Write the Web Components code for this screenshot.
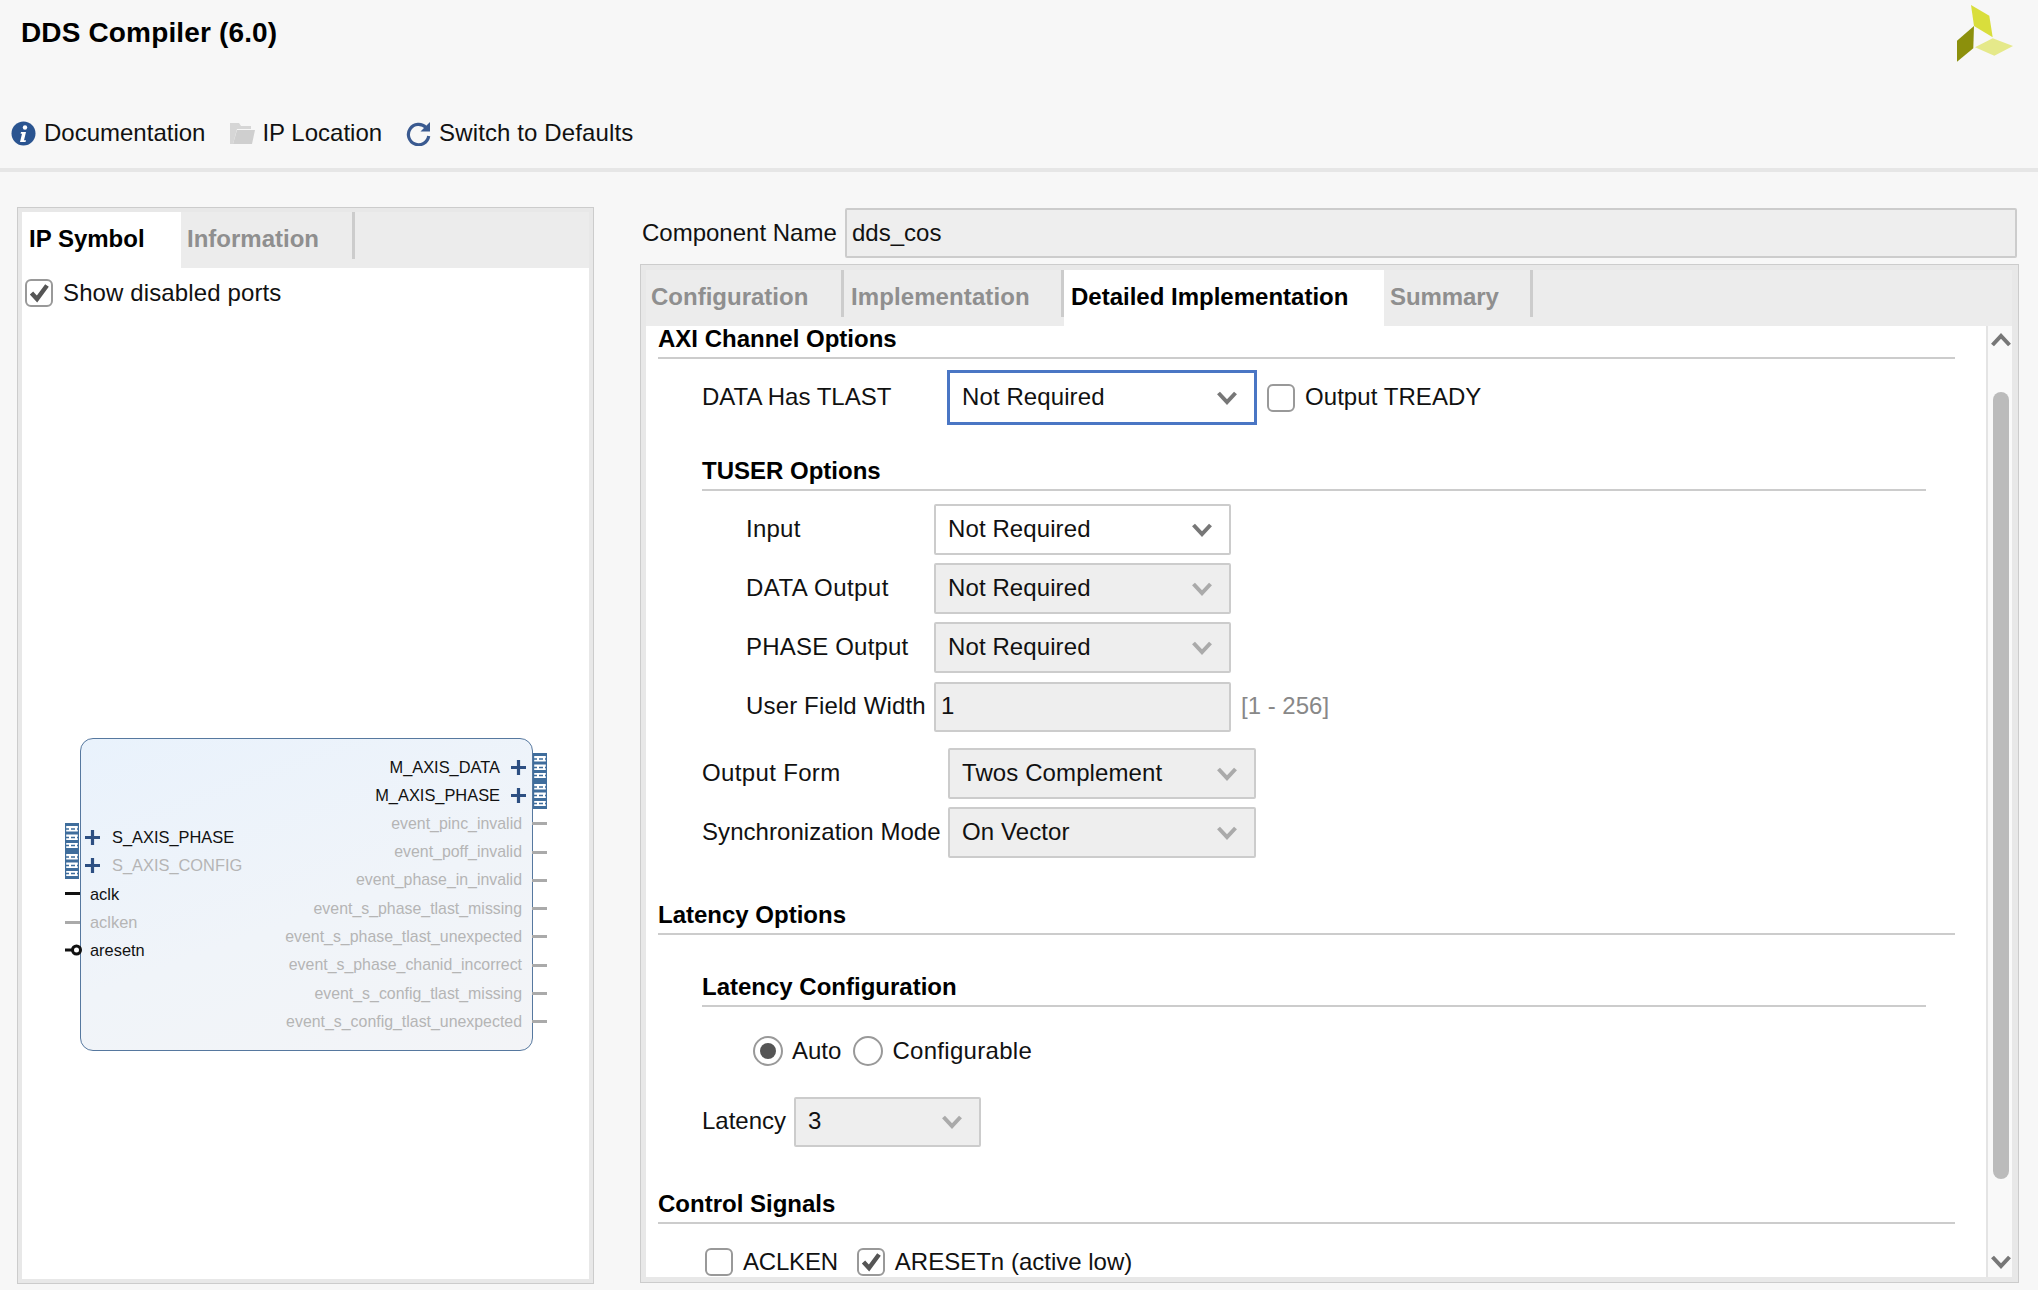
<!DOCTYPE html>
<html lang="en">
<head>
<meta charset="utf-8">
<title>DDS Compiler</title>
<style>
html,body{margin:0;padding:0;height:1290px;overflow:hidden;background:#f7f7f7}
body{font:24px/28px "Liberation Sans",Arial,sans-serif;color:#111}
</style>
</head>
<body>
<x-app>
  <x-header slot="header" title-text="DDS Compiler (6.0)">
    <x-tool>
      <svg slot="icon" width="25" height="25" viewBox="0 0 25 25"><circle cx="12.5" cy="12.5" r="12" fill="#2a5490"/><circle cx="14" cy="6.5" r="2.2" fill="#fff"/><path d="M10 11h5l-2 8.2h2l-.5 1.8H9l2-8.200H9.600z" fill="#fff"/></svg>
      Documentation
    </x-tool>
    <x-tool style="--ir:7px">
      <svg slot="icon" width="25" height="25" viewBox="0 0 25 25"><path d="M0 2h9l2 3h10v3H7L3 23H0z" fill="#d6d6d6"/><path d="M7 9h18l-3 14H3z" fill="#cfcfcf"/></svg>
      IP Location
    </x-tool>
    <x-tool style="margin-left:-1px;letter-spacing:.12px">
      <svg slot="icon" width="25" height="25" viewBox="0 0 25 25"><path d="M20 6.500A10.200 10.200 0 1 0 22.700 15" fill="none" stroke="#3a5a90" stroke-width="3.200"/><path d="M24 1v9.500h-9.500z" fill="#3a5a90"/></svg>
      Switch to Defaults
    </x-tool>
  </x-header>

  <x-panel slot="left" style="--pr:4px;--pl:4px;--pt:4px;--pb:4px;height:1077px">
    <x-tabs>
      <x-tab active style="width:159px;--tp:7px">IP Symbol</x-tab>
      <x-tab divider style="width:174px;--tp:6px">Information</x-tab>
    </x-tabs>
    <x-pane>
      <x-check checked style="margin:11px 0 0 3px;letter-spacing:.12px">Show disabled ports</x-check>
      <x-symbol style="margin:431px 0 0 58px">
        <x-port slot="left" kind="bus">S_AXIS_PHASE</x-port>
        <x-port slot="left" kind="bus" disabled>S_AXIS_CONFIG</x-port>
        <x-port slot="left" kind="line">aclk</x-port>
        <x-port slot="left" kind="line" disabled>aclken</x-port>
        <x-port slot="left" kind="neg">aresetn</x-port>
        <x-port slot="right" kind="bus">M_AXIS_DATA</x-port>
        <x-port slot="right" kind="bus">M_AXIS_PHASE</x-port>
        <x-port slot="right" kind="line" disabled>event_pinc_invalid</x-port>
        <x-port slot="right" kind="line" disabled>event_poff_invalid</x-port>
        <x-port slot="right" kind="line" disabled>event_phase_in_invalid</x-port>
        <x-port slot="right" kind="line" disabled>event_s_phase_tlast_missing</x-port>
        <x-port slot="right" kind="line" disabled>event_s_phase_tlast_unexpected</x-port>
        <x-port slot="right" kind="line" disabled>event_s_phase_chanid_incorrect</x-port>
        <x-port slot="right" kind="line" disabled>event_s_config_tlast_missing</x-port>
        <x-port slot="right" kind="line" disabled>event_s_config_tlast_unexpected</x-port>
      </x-symbol>
    </x-pane>
  </x-panel>

  <x-name-row slot="right" label="Component Name" value="dds_cos"></x-name-row>

  <x-panel slot="right" style="--pr:6px;--pl:5px;--pt:5px;--pb:5px;height:1019px;margin-top:6px">
    <x-tabs>
      <x-tab divider style="width:198px;--tp:5px">Configuration</x-tab>
      <x-tab divider style="width:220px;--tp:7px;letter-spacing:.1px">Implementation</x-tab>
      <x-tab active style="width:320px;--tp:7px">Detailed Implementation</x-tab>
      <x-tab divider style="width:149px;--tp:6px;letter-spacing:-.1px">Summary</x-tab>
    </x-tabs>
    <x-scroll>
      <x-section>AXI Channel Options</x-section>
      <x-row indent="44" label-width="245" style="margin-top:11px">
        <span slot="label">DATA Has TLAST</span>
        <x-combo focus style="width:310px;height:55px">Not Required</x-combo>
        <x-check style="margin-left:10px;letter-spacing:.06px;--tb:2px">Output TREADY</x-check>
      </x-row>
      <x-section sub style="margin-top:33px">TUSER Options</x-section>
      <x-row indent="88" label-width="188" style="margin-top:13px">
        <span slot="label" style="letter-spacing:.25px">Input</span>
        <x-combo enabled style="width:297px;height:51px">Not Required</x-combo>
      </x-row>
      <x-row indent="88" label-width="188" style="margin-top:8px">
        <span slot="label" style="letter-spacing:.45px">DATA Output</span>
        <x-combo style="width:297px;height:51px">Not Required</x-combo>
      </x-row>
      <x-row indent="88" label-width="188" style="margin-top:8px">
        <span slot="label" style="letter-spacing:.2px">PHASE Output</span>
        <x-combo style="width:297px;height:51px">Not Required</x-combo>
      </x-row>
      <x-row indent="88" label-width="188" style="margin-top:9px">
        <span slot="label" style="letter-spacing:.15px">User Field Width</span>
        <x-field style="width:297px;height:50px">1</x-field>
        <x-hint>[1 - 256]</x-hint>
      </x-row>
      <x-row indent="44" label-width="246" style="margin-top:16px">
        <span slot="label" style="letter-spacing:.35px">Output Form</span>
        <x-combo style="width:308px;height:51px">Twos Complement</x-combo>
      </x-row>
      <x-row indent="44" label-width="246" style="margin-top:8px">
        <span slot="label" style="letter-spacing:.06px">Synchronization Mode</span>
        <x-combo style="width:308px;height:51px">On Vector</x-combo>
      </x-row>
      <x-section style="margin-top:44px">Latency Options</x-section>
      <x-section sub style="margin-top:39px">Latency Configuration</x-section>
      <x-row indent="95" label-width="0" style="margin-top:29px">
        <x-radio checked>Auto</x-radio>
        <x-radio style="margin-left:12px;letter-spacing:.3px">Configurable</x-radio>
      </x-row>
      <x-row indent="44" label-width="92" style="margin-top:31px">
        <span slot="label">Latency</span>
        <x-combo style="width:187px;height:50px">3</x-combo>
      </x-row>
      <x-section style="margin-top:44px">Control Signals</x-section>
      <x-row indent="47" label-width="0" style="margin-top:24px">
        <x-check style="letter-spacing:-.2px">ACLKEN</x-check>
        <x-check checked style="margin-left:19px">ARESETn (active low)</x-check>
      </x-row>
    </x-scroll>
  </x-panel>
</x-app>

<script>
const CHECK = '<svg width="28" height="28" viewBox="0 0 28 28"><path d="M6.500 14l5.500 6 10-13.500" fill="none" stroke="#555" stroke-width="4.500"/></svg>';
function def(name, html, extra) {
  const t = document.createElement('template');
  t.innerHTML = html;
  customElements.define(name, class extends HTMLElement {
    constructor() {
      super();
      this.attachShadow({mode: 'open'}).appendChild(t.content.cloneNode(true));
    }
    connectedCallback() { if (extra) extra(this, this.shadowRoot); }
  });
}

def('x-app', `<style>
  :host{display:block;width:2038px;height:1290px;overflow:hidden}
  main{display:grid;grid-template-columns:577px 1379px;column-gap:46px;padding:35px 0 0 17px}
  .r{display:flex;flex-direction:column}
</style>
<slot name="header"></slot>
<main><div><slot name="left"></slot></div><div class="r"><slot name="right"></slot></div></main>`);

def('x-header', `<style>
  :host{display:block;height:168px;border-bottom:4px solid #e6e6e6;box-sizing:content-box}
  .top{display:flex;justify-content:space-between;height:115px;padding:0 25px 0 21px;box-sizing:border-box}
  h1{margin:17px 0 0;font:bold 28px/32px "Liberation Sans",Arial,sans-serif;color:#000;letter-spacing:.15px}
  svg{display:block;margin-top:5px}
  .bar{display:flex;align-items:center;height:36px;padding-left:11px;gap:25px}
</style>
<div class="top"><h1></h1>
<svg width="56" height="57" viewBox="1957 5 56 57"><polygon points="1971,5 1989.300,15.700 1992.700,37.300 1974,26" fill="#d9de3c"/><polygon points="1974,26 1973.300,48.300 1957,61.700 1957,40.700" fill="#8c900c"/><polygon points="1992.700,38.300 2013,46 1994.300,55.700 1975,47.300" fill="#e5e98a"/></svg></div>
<div class="bar"><slot></slot></div>`, (el, root) => { root.querySelector('h1').textContent = el.getAttribute('title-text'); });

def('x-tool', `<style>
  :host{display:flex;align-items:center;white-space:nowrap;height:36px}
  ::slotted(svg){display:block;margin-right:var(--ir,8px)}
</style><slot name="icon"></slot><slot></slot>`);

def('x-panel', `<style>
  :host{display:flex;flex-direction:column;box-sizing:border-box;border:1px solid #ccc;background:#e8e8e8;
    padding:var(--pt) var(--pr) var(--pb) var(--pl)}
</style><slot></slot>`);

def('x-tabs', `<style>
  :host{display:flex;height:56px;flex:none;background:#ececec}
</style><slot></slot>`);

def('x-tab', `<style>
  :host{display:block;height:56px;box-sizing:border-box;font-weight:bold;color:#8f8f8f;flex:none}
  :host([active]){background:#fff;color:#000}
  .in{height:47px;box-sizing:border-box;padding:13px 0 0 var(--tp,6px);line-height:28px;white-space:nowrap}
  :host([divider]) .in{border-right:3px solid #ccc}
</style><div class="in"><slot></slot></div>`);

def('x-pane', `<style>
  :host{display:block;flex:1;background:#fff;overflow:hidden}
</style><slot></slot>`);

def('x-check', `<style>
  :host{display:inline-flex;align-items:center;white-space:nowrap;height:28px;vertical-align:top}
  .b{width:28px;height:28px;box-sizing:border-box;border:2px solid #999;border-radius:6px;background:#fff;margin-right:10px;flex:none;overflow:hidden}
  .t{padding-bottom:var(--tb,0)}
  svg{display:block;margin:-2px}
  :host(:not([checked])) svg{display:none}
</style><span class="b">${CHECK}</span><span class="t"><slot></slot></span>`);

def('x-radio', `<style>
  :host{display:inline-flex;align-items:center;white-space:nowrap;height:30px}
  .b{width:30px;height:30px;box-sizing:border-box;border:2px solid #999;border-radius:50%;background:#fff;margin-right:9px;display:flex;align-items:center;justify-content:center;flex:none}
  i{display:none;width:16px;height:16px;border-radius:50%;background:#555}
  :host([checked]) i{display:block}
</style><span class="b"><i></i></span><slot></slot>`);

def('x-symbol', `<style>
  :host{display:flex;justify-content:space-between;width:453px;height:313px;box-sizing:border-box;
    border:1.500px solid #56789f;border-radius:13px;background:linear-gradient(160deg,#e9f2fc 0%,#f0f4f9 55%,#f3f4f7 100%);
    position:relative;font-size:16.400px;line-height:20px}
  .l{display:flex;flex-direction:column;padding-top:84px}
  .r{display:flex;flex-direction:column;padding-top:14px}
</style><div class="l"><slot name="left"></slot></div><div class="r"><slot name="right"></slot></div>`);

const busSvg = `<svg width="14" height="28" viewBox="0 0 14 28"><g fill="none" stroke="#3f6d9c"><path stroke-width="3" d="M0 1.500h14M0 10h14M0 18.500h14M0 26.500h14"/><path stroke-width="1.500" stroke-dasharray="4 2" d="M0 6h14M0 14.500h14M0 22.500h14"/></g><path d="M0.600 0v28M13.400 0v28" stroke="#3f6d9c" stroke-width="1.200"/></svg>`;
const plusSvg = `<svg class="plus" width="15" height="15" viewBox="0 0 15 15"><path d="M0 7.500h15M7.500 0v15" stroke="#2d4f82" stroke-width="3.200"/></svg>`;
def('x-port', `<style>
  :host{display:flex;align-items:center;height:28.300px;position:relative;white-space:nowrap;color:#111}
  :host([disabled]){color:#b5b5b5}
  :host([slot=right]){justify-content:flex-end}
  :host([slot=right][disabled]){font-size:15.900px}
  .holder{display:contents}
  .pin{position:absolute;top:50%;display:block}
  .plus{flex:none}
  :host([slot=left]) .plus{margin:0 12px 0 4px}
  :host([slot=right]) .plus{margin:0 6px 0 11px}
  :host([slot=left]) .txt{padding-left:9px}
  :host([slot=right]) .txt{padding-right:10px}
  :host([slot=left]) .pin{left:-16px}
  :host([slot=right]) .pin{right:-15px}
  .ln{width:15px;height:3px;margin-top:-1.500px;background:#111}
  :host([disabled]) .ln{background:#aaa}
  .bus{margin-top:-14px}
  .bus svg{display:block}
</style><span class="holder"></span>`, (el, root) => {
  const kind = el.getAttribute('kind'), side = el.getAttribute('slot');
  const h = root.querySelector('.holder');
  let pin = '';
  if (kind === 'bus') pin = `<span class="pin bus">${busSvg}</span>`;
  if (kind === 'line') pin = `<span class="pin ln"></span>`;
  if (kind === 'neg') pin = `<svg class="pin" style="margin-top:-7px" width="17" height="14" viewBox="0 0 17 14"><path d="M0 7h8" stroke="#111" stroke-width="3"/><circle cx="11.500" cy="7" r="4" fill="none" stroke="#111" stroke-width="3"/></svg>`;
  const txt = kind === 'bus' ? '<slot></slot>' : '<span class="txt"><slot></slot></span>';
  const plus = kind === 'bus' ? plusSvg : '';
  h.innerHTML = pin + (side === 'left' ? plus + txt : txt + plus);
});

def('x-name-row', `<style>
  :host{display:flex;align-items:center;height:50px;margin-top:1px}
  .lab{width:205px;padding-left:2px;box-sizing:border-box;white-space:nowrap}
  .val{width:1172px;height:50px;box-sizing:border-box;border:2px solid #ccc;border-radius:2px;background:#eee;padding-left:5px;display:flex;align-items:center}
</style><span class="lab"></span><span class="val"></span>`, (el, root) => {
  root.querySelector('.lab').textContent = el.getAttribute('label');
  root.querySelector('.val').textContent = el.getAttribute('value');
});

def('x-scroll', `<style>
  :host{display:grid;grid-template-columns:1fr 26px;flex:1;min-height:0;background:#fff;overflow:hidden}
  .c{padding:0 31px 0 12px;min-width:0;overflow:hidden}
  .sb{display:flex;flex-direction:column;align-items:center;background:#f9f9f9;border-left:2px solid #e4e4e4;box-sizing:border-box;padding-left:2px}
  .up{margin-top:7px;display:block;flex:none}
  .th{width:16px;height:787px;border-radius:8px;background:#bbb;margin-top:45px;flex:none}
  .dn{margin-top:76px;display:block;flex:none}
</style><div class="c"><slot></slot></div>
<div class="sb">
<svg class="up" width="20" height="14" viewBox="0 0 20 14"><path d="M1.500 12L10 3l8.500 9" fill="none" stroke="#777" stroke-width="4"/></svg>
<div class="th"></div>
<svg class="dn" width="20" height="14" viewBox="0 0 20 14"><path d="M1.500 2L10 11l8.500-9" fill="none" stroke="#777" stroke-width="4"/></svg>
</div>`);

def('x-section', `<style>
  :host{display:block;font-weight:bold;line-height:26px;padding-bottom:5px;border-bottom:2px solid #ccc;color:#000;white-space:nowrap}
  :host([sub]){margin-left:44px;margin-right:29px}
</style><slot></slot>`);

def('x-row', `<style>
  :host{display:flex;align-items:center}
  .lab{white-space:nowrap;flex:none;padding-bottom:2px}
</style><span class="lab"><slot name="label"></slot></span><slot></slot>`, (el, root) => {
  el.style.paddingLeft = el.getAttribute('indent') + 'px';
  root.querySelector('.lab').style.width = el.getAttribute('label-width') + 'px';
});

def('x-combo', `<style>
  :host{display:flex;align-items:center;box-sizing:border-box;border:2px solid #ccc;border-radius:2px;background:#eee;padding:0 17px 0 12px;white-space:nowrap;flex:none;letter-spacing:.1px}
  :host([enabled]){background:#fff}
  :host([focus]){background:#fff;border:3px solid #4a76c4;border-radius:0;padding:0 17px 0 12px}
  .t{flex:1;padding-bottom:2px}
  svg{display:block;flex:none}
  path{stroke:#aaa}
  :host([enabled]) path,:host([focus]) path{stroke:#777}
</style><span class="t"><slot></slot></span><svg width="20" height="14" viewBox="0 0 20 14"><path d="M1.500 2L10 11l8.500-9" fill="none" stroke-width="4"/></svg>`);

def('x-field', `<style>
  :host{display:flex;align-items:center;box-sizing:border-box;border:2px solid #ccc;border-radius:2px;background:#eee;padding:0 0 2px 5px;flex:none}
</style><slot></slot>`);

def('x-hint', `<style>
  :host{display:block;color:#888;margin-left:10px;white-space:nowrap;padding-bottom:2px}
</style><slot></slot>`);
</script>
</body>
</html>
